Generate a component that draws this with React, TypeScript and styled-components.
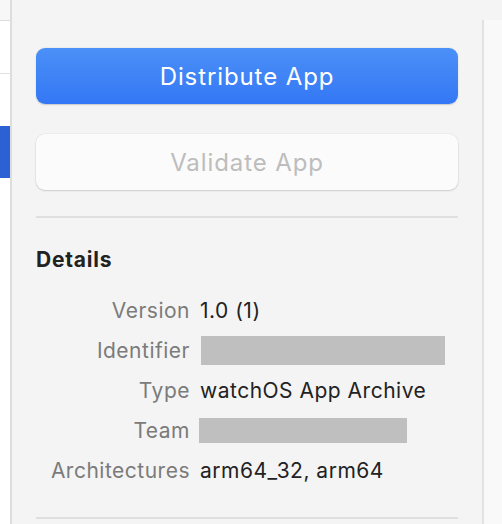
import styled, { createGlobalStyle } from 'styled-components'

const GlobalStyle = createGlobalStyle`
html, body {
  margin: 0;
  padding: 0;
  background: #f4f4f4;
}
body {
  font-family: Inter, "Noto Sans", sans-serif;
  -webkit-font-smoothing: antialiased;
}
`

const Page = styled.div`
display: flex;
width: 502px;
height: 524px;
overflow: hidden;
background: #f4f4f4;
`

const Sidebar = styled.div`
width: 10px;
flex-shrink: 0;
display: flex;
flex-direction: column;
background: #ffffff;
border-right: 2px solid #dddddd;
`

const SidebarTop = styled.div`
height: 20px;
background: #f7f7f7;
border-bottom: 1px solid #dcdcdc;
`

const SidebarRow = styled.div<{ $selected?: boolean; $divided?: boolean }>`
height: 52px;
background: ${p => (p.$selected ? '#2c61d6' : '#ffffff')};
border-bottom: ${p => (p.$divided ? '1px solid #e2e2e2' : 'none')};
`

const Main = styled.div`
flex: 1;
display: flex;
flex-direction: column;
padding: 48px 24px 0;
`

const PrimaryButton = styled.button`
height: 56px;
width: 100%;
border: none;
border-radius: 9px;
background: linear-gradient(#4b90f7, #3477f5);
box-shadow: 0 0.5px 1.5px rgba(0, 0, 0, 0.18);
color: #ffffff;
font-family: Inter, sans-serif;
font-size: 24px;
letter-spacing: 0.9px;
font-weight: 400;
padding: 0;
`

const SecondaryButton = styled.button`
margin-top: 30px;
height: 56px;
width: 100%;
border: none;
border-radius: 9px;
background: #fbfbfb;
box-shadow: 0 0 0 0.5px rgba(0, 0, 0, 0.06), 0 1px 2px rgba(0, 0, 0, 0.14);
color: #bdbdbd;
font-family: Inter, sans-serif;
font-size: 24px;
letter-spacing: 0.9px;
font-weight: 400;
padding: 0;
`

const Divider = styled.div<{ $top: number }>`
margin-top: ${p => p.$top}px;
height: 2px;
background: #dfdfdf;
`

const Heading = styled.div`
margin-top: 27px;
height: 30px;
line-height: 30px;
font-size: 21px;
letter-spacing: 0.8px;
font-weight: 700;
color: #222222;
`

const Rows = styled.div`
margin-top: 15px;
display: flex;
flex-direction: column;
`

const Row = styled.div`
height: 40px;
display: grid;
grid-template-columns: 154px 1fr;
column-gap: 10px;
align-items: center;
font-size: 21px;
letter-spacing: 0.5px;
`

const Label = styled.span`
text-align: right;
color: #7b7b7b;
`

const Value = styled.span`
color: #222222;
`

const Redacted = styled.div<{ $w: number; $h: number; $shift?: number }>`
width: ${p => p.$w}px;
height: ${p => p.$h}px;
margin-left: ${p => p.$shift ?? 0}px;
background: #bfbfbf;
`

const RightPane = styled.div`
width: 20px;
flex-shrink: 0;
padding-top: 20px;
display: flex;
`

const RightInner = styled.div`
flex: 1;
border-left: 2px solid #e2e2e2;
background: #f9f9f9;
`

export default function App() {
  return (
    <>
      <GlobalStyle />
      <Page>
        <Sidebar>
          <SidebarTop />
          <SidebarRow $divided />
          <SidebarRow />
          <SidebarRow $selected />
        </Sidebar>
        <Main>
          <PrimaryButton>Distribute App</PrimaryButton>
          <SecondaryButton disabled>Validate App</SecondaryButton>
          <Divider $top={26} />
          <Heading>Details</Heading>
          <Rows>
            <Row>
              <Label>Version</Label>
              <Value>1.0 (1)</Value>
            </Row>
            <Row>
              <Label>Identifier</Label>
              <Redacted $w={244} $h={29} $shift={1} />
            </Row>
            <Row>
              <Label>Type</Label>
              <Value>watchOS App Archive</Value>
            </Row>
            <Row>
              <Label>Team</Label>
              <Redacted $w={208} $h={25} $shift={-1} />
            </Row>
            <Row>
              <Label>Architectures</Label>
              <Value>arm64_32, arm64</Value>
            </Row>
          </Rows>
          <Divider $top={27} />
        </Main>
        <RightPane>
          <RightInner />
        </RightPane>
      </Page>
    </>
  )
}
